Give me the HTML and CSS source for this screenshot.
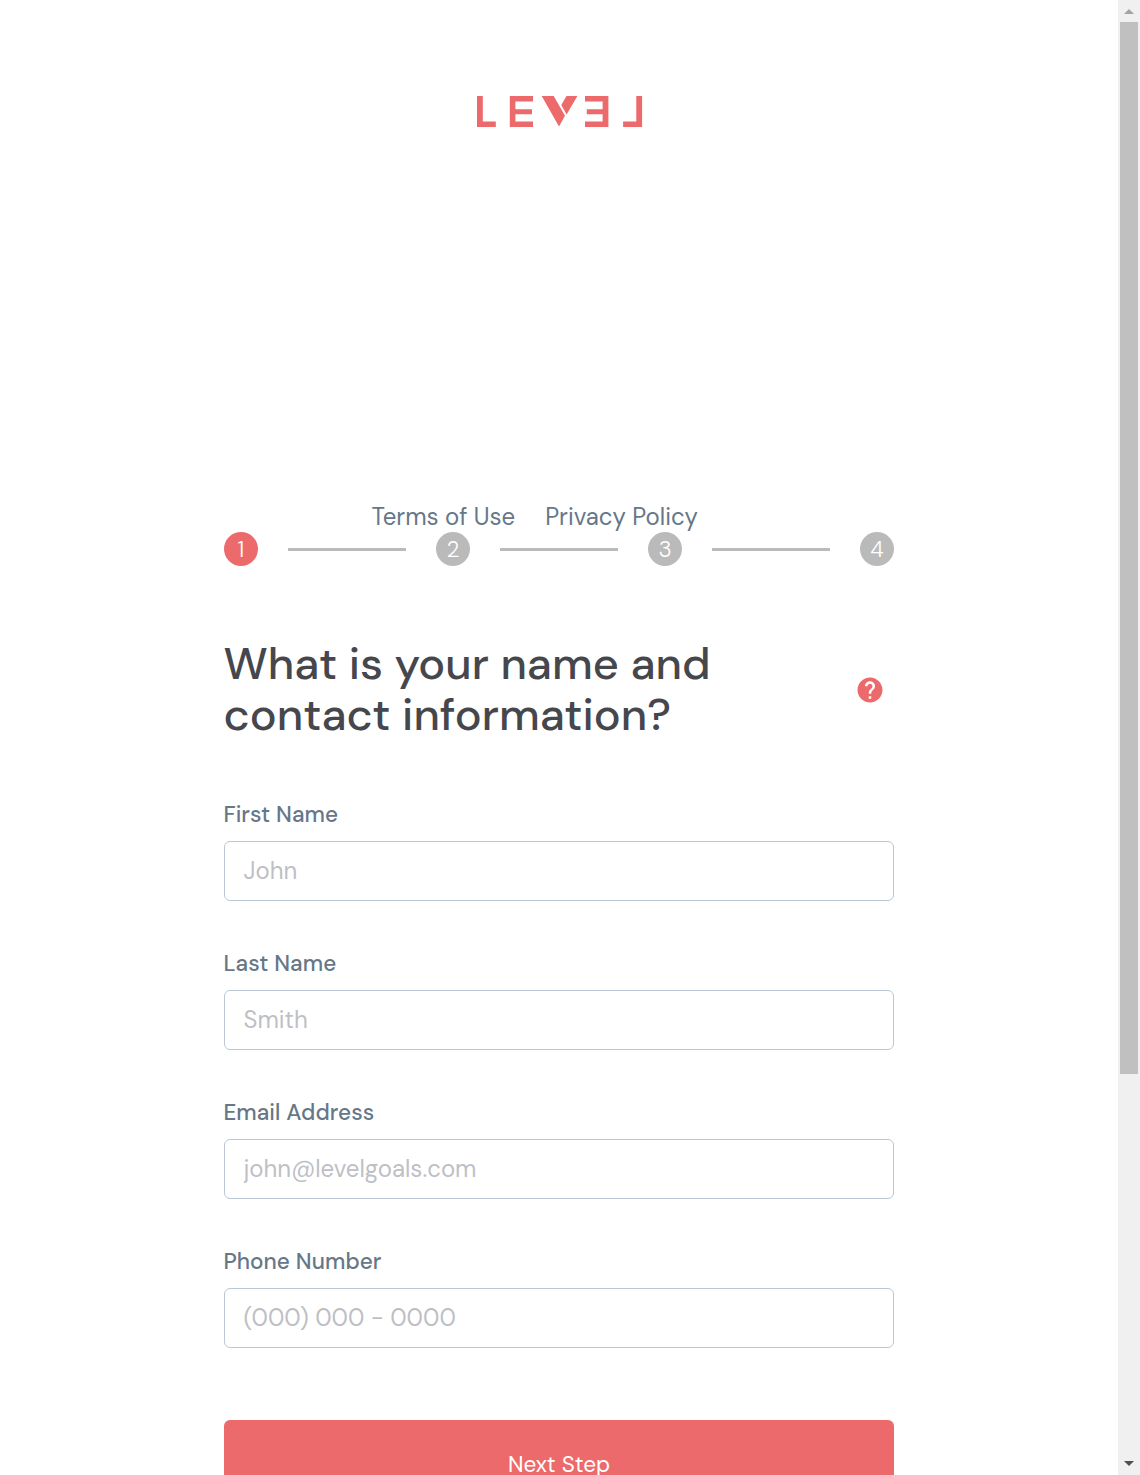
FILE: index.html
```html
<!DOCTYPE html>
<html lang="en">
<head>
<meta charset="utf-8">
<title>Level</title>
<link rel="stylesheet" href="styles.css">
</head>
<body>
<div class="page">
  <main class="content">
    <header class="brand">
      <svg class="logo" width="166" height="32" viewBox="0 0 166 32" role="img" aria-label="Level">
        <path d="M0 0h5.8v25.4h13V31H0zM32.8 0H56v5.4H38.4v7.8H55v5H38.4v7.4H56V31H32.8zM64.7 0h12L88 19.8 82 30.4zM89.5 0h10.9L89.6 18.4 84.3 8.9zM108 0h23.4v31H108v-5.4h17.6v-7.4h-15.8v-5h15.8V5.4H108zM159.3 0h5.8v31h-19v-5.6h13.2z"/>
      </svg>
    </header>
    <nav class="legal">
      <a>Terms of Use</a>
      <a>Privacy Policy</a>
    </nav>
    <div class="steps">
      <span class="step active">1</span><span class="line"></span>
      <span class="step">2</span><span class="line"></span>
      <span class="step">3</span><span class="line"></span>
      <span class="step">4</span>
    </div>
    <div class="question">
      <h1>What is your name and<br>contact information?</h1>
      <svg class="help" width="30" height="30" viewBox="0 0 24 24">
        <path d="M12 2C6.48 2 2 6.48 2 12s4.48 10 10 10 10-4.48 10-10S17.52 2 12 2zm1 17h-2v-2h2v2zm2.07-7.75l-.9.92C13.45 12.9 13 13.5 13 15h-2v-.5c0-1.1.45-2.1 1.17-2.83l1.24-1.26c.37-.36.59-.86.59-1.41 0-1.1-.9-2-2-2s-2 .9-2 2H8c0-2.21 1.79-4 4-4s4 1.79 4 4c0 .88-.36 1.68-.93 2.25z"/>
      </svg>
    </div>
    <form>
      <div class="field">
        <label for="first">First Name</label>
        <input id="first" placeholder="John">
      </div>
      <div class="field">
        <label for="last">Last Name</label>
        <input id="last" placeholder="Smith">
      </div>
      <div class="field">
        <label for="email">Email Address</label>
        <input id="email" placeholder="john@levelgoals.com">
      </div>
      <div class="field">
        <label for="phone">Phone Number</label>
        <input id="phone" placeholder="(000) 000 - 0000">
      </div>
      <button type="button">Next Step</button>
    </form>
  </main>
  <aside class="scrollbar">
    <svg width="22" height="22"><path fill="#a3a3a3" d="M6 14h10l-5-5z"/></svg>
    <div class="thumb"></div>
    <svg width="22" height="22"><path fill="#505050" d="M6 8h10l-5 5z"/></svg>
  </aside>
</div>
</body>
</html>
```
FILE: styles.css
```css
* { box-sizing: border-box; }
body { margin: 0; background: #fff; font-family: "DM Sans", Inter, sans-serif; }
.page { display: flex; height: 1475px; overflow: hidden; }
.content { flex: 1; padding: 96px 224px 0; }
.brand { display: flex; justify-content: center; height: 404px; }
.logo { fill: #ec6a6b; margin-left: 2px; }
.legal { display: flex; gap: 30px; height: 32px; padding-left: 147.4px; font-size: 24px; line-height: 33px; color: #667788; }
.steps { display: flex; align-items: center; justify-content: space-between; height: 34px; }
.step { width: 34px; height: 34px; border-radius: 50%; background: #bababa; color: #fff; font-size: 22.5px; font-weight: 300; line-height: 36px; text-align: center; }
.step.active { background: #ec6a6b; }
.line { width: 118px; height: 3px; background: #bababa; }
.question { display: flex; justify-content: space-between; align-items: center; height: 102px; margin-top: 72px; padding-right: 9px; }
h1 { margin: 0 0 0 -0.5px; font-size: 45px; line-height: 51px; font-weight: 500; letter-spacing: .03px; color: #46474d; white-space: nowrap; }
.help { fill: #ec6a6b; position: relative; top: 1px; }
form { display: flex; flex-direction: column; padding-top: 59px; }
.field { display: flex; flex-direction: column; height: 149px; }
label { height: 42px; margin-left: -0.6px; font-size: 22.5px; line-height: 31px; font-weight: 500; letter-spacing: .06px; color: #667788; }
input { width: 100%; height: 60px; padding: 0 18.5px 2px; border: 1px solid #bcc7d5; border-radius: 6px; font: 400 24px "DM Sans", Inter, sans-serif; color: #46474d; background: #fff; }
input::placeholder { color: #bebfc5; opacity: 1; }
button { width: 100%; height: 90px; margin-top: 25px; padding: 0 0 2px; border: 0; border-radius: 6px; background: #ec6a6b; color: #fff; font: 400 22.5px "DM Sans", Inter, sans-serif; }
.scrollbar { display: flex; flex-direction: column; width: 22px; background: #f0f0f0; }
.thumb { height: 1052px; margin: 0 2px auto; background: #c0c0c0; }
```
